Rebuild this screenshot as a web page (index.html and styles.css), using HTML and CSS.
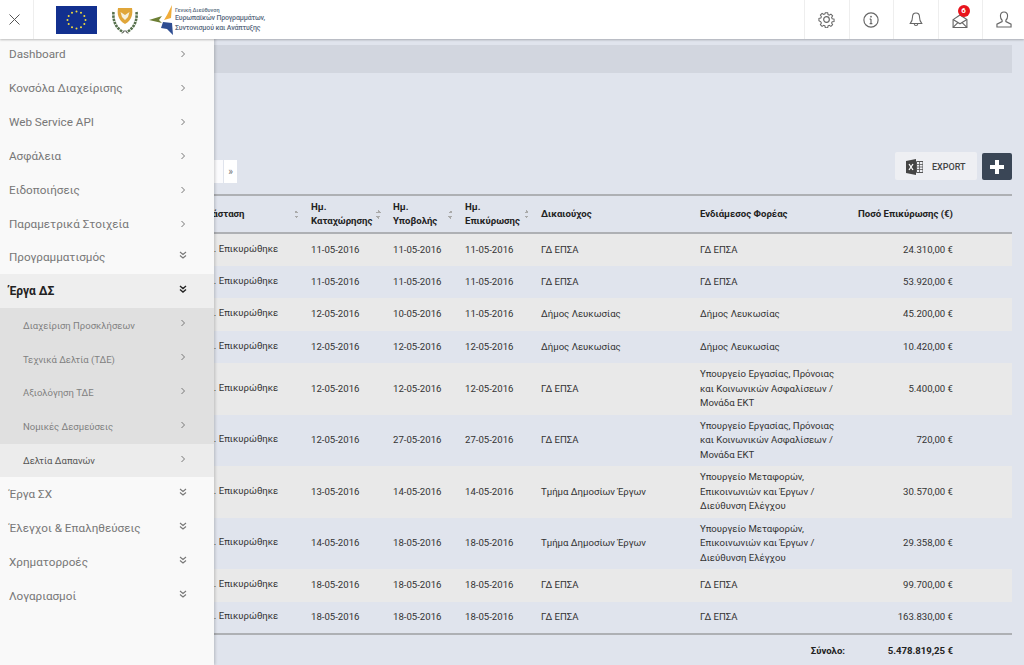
FILE: index.html
```html
<!DOCTYPE html>
<html>
  <head>
    <title>Δελτία Δαπανών</title>
    <meta name="viewport" content="width=device-width, initial-scale=1" />
    <link rel="stylesheet" href="styles.css">
  </head>
  <body>
    <!-- header -->
    <header class="topbar">
      <div class="close-cell">
        <svg width="11" height="11" viewBox="0 0 11 11"><path d="M.5.5l10 10M10.500.5l-10 10" stroke="#555" stroke-width="1" fill="none"/></svg>
      </div>
      <div class="logos">
        <svg class="flag" width="41" height="28" viewBox="0 0 41 28">
          <rect width="41" height="28" fill="#12308f"/>
          <g fill="#f2dc3c">
            <circle cx="20.500" cy="5.500" r="1"/><circle cx="25" cy="6.700" r="1"/><circle cx="28.300" cy="10" r="1"/>
            <circle cx="29.500" cy="14" r="1"/><circle cx="28.300" cy="18" r="1"/><circle cx="25" cy="21.300" r="1"/>
            <circle cx="20.500" cy="22.500" r="1"/><circle cx="16" cy="21.300" r="1"/><circle cx="12.700" cy="18" r="1"/>
            <circle cx="11.500" cy="14" r="1"/><circle cx="12.700" cy="10" r="1"/><circle cx="16" cy="6.700" r="1"/>
          </g>
        </svg>
        <svg class="emblem" width="28" height="28" viewBox="0 0 28 28">
          <path d="M7 2h14c1 6 0 12-7 16C7 14 6 8 7 2z" fill="#e0a63a"/>
          <path d="M9.500 6l4.500 3 4.500-3-1.500 5-3 3-3-3z" fill="#f6f0dc"/>
          <path d="M2.500 6c-1 9 3 17 10 20M25.500 6c1 9-3 17-10 20" stroke="#56704c" stroke-width="2.600" stroke-dasharray="2.500 .8" fill="none"/>
          <path d="M11 27.500l3-3 3 3" stroke="#555" stroke-width="1" fill="none"/>
        </svg>
        <svg class="arrows" width="24" height="30" viewBox="0 0 24 30">
          <path d="M23 0l-1 13-7 2 3-5z" fill="#f0ac3a"/>
          <path d="M0 15l13-4-3 4 3 3z" fill="#6d7f35"/>
          <path d="M14 17l9 1 1 12-6-6-6-1z" fill="#2e4d92"/>
        </svg>
        <div class="logo-text">
          <span class="logo-small">Γενική Διεύθυνση</span>
          <span>Ευρωπαϊκών Προγραμμάτων,</span>
          <span>Συντονισμού και Ανάπτυξης</span>
        </div>
      </div>
      <div class="top-icons">
        <div class="top-icon">
          <svg width="17" height="17" viewBox="0 0 18 18" fill="none" stroke="#666" stroke-width="1.200"><path d="M7.600 1h2.800l.4 2.200 1.500.7 1.900-1.200 2 2-1.200 1.900.7 1.500 2.200.4v2.800l-2.200.4-.7 1.500 1.200 1.900-2 2-1.900-1.200-1.500.7-.4 2.200H7.600l-.4-2.200-1.500-.7-1.900 1.200-2-2 1.200-1.900-.7-1.500L.1 10.400V7.600l2.200-.4.7-1.500-1.200-1.900 2-2 1.900 1.200 1.500-.7z" transform="translate(.9 .9) scale(.9)"/><circle cx="9" cy="9" r="3"/></svg>
        </div>
        <div class="top-icon">
          <svg width="16" height="16" viewBox="0 0 18 18" fill="none" stroke="#666" stroke-width="1.300"><circle cx="9" cy="9" r="8"/><path d="M9 8v5M7.500 8H9M7.500 13h3" /><circle cx="9" cy="5.300" r="1" fill="#666" stroke="none"/></svg>
        </div>
        <div class="top-icon">
          <svg width="14" height="17" viewBox="0 0 16 18" fill="none" stroke="#666" stroke-width="1.200"><path d="M8 1.500c-2.800 0-4 2.200-4 4.500 0 4-1 5.500-2.500 7.500h13C13 11.500 12 10 12 6c0-2.300-1.200-4.500-4-4.500z"/><path d="M6 14c0 2.500 4 2.500 4 0"/></svg>
        </div>
        <div class="top-icon">
          <svg width="16" height="14" viewBox="0 0 16 15" fill="none" stroke="#666" stroke-width="1.200" class="mail"><path d="M.6 6L8 1l7.400 5v8.400H.6z"/><path d="M.6 6L8 10.500 15.400 6M.6 14.400L6 9M15.400 14.400L10 9"/></svg>
          <span class="badge">6</span>
        </div>
        <div class="top-icon">
          <svg width="16" height="17" viewBox="0 0 17 18" fill="none" stroke="#666" stroke-width="1.200"><path d="M8.500 1c-2.600 0-3.800 2-3.800 4.300 0 2 .8 3.500 1.800 4.500v1.400L1 14v3h15v-3l-5.500-2.800V9.800c1-1 1.800-2.500 1.800-4.500C12.300 3 11.100 1 8.500 1z"/></svg>
        </div>
      </div>
    </header>

    <!-- side menu -->
    <nav class="sidebar">
      <a class="menu-item">Dashboard<svg class="chev" viewBox="0 0 6 8"><path d="M1.500 1l3 3-3 3"/></svg></a>
      <a class="menu-item">Κονσόλα Διαχείρισης<svg class="chev" viewBox="0 0 6 8"><path d="M1.500 1l3 3-3 3"/></svg></a>
      <a class="menu-item">Web Service API<svg class="chev" viewBox="0 0 6 8"><path d="M1.500 1l3 3-3 3"/></svg></a>
      <a class="menu-item">Ασφάλεια<svg class="chev" viewBox="0 0 6 8"><path d="M1.500 1l3 3-3 3"/></svg></a>
      <a class="menu-item">Ειδοποιήσεις<svg class="chev" viewBox="0 0 6 8"><path d="M1.500 1l3 3-3 3"/></svg></a>
      <a class="menu-item">Παραμετρικά Στοιχεία<svg class="chev" viewBox="0 0 6 8"><path d="M1.500 1l3 3-3 3"/></svg></a>
      <a class="menu-item">Προγραμματισμός<svg class="dchev" viewBox="0 0 8 8"><path d="M1 1l3 2.500L7 1M1 4.500L4 7l3-2.500"/></svg></a>
      <a class="menu-item open">Έργα ΔΣ<svg class="dchev" viewBox="0 0 8 8"><path d="M1 1l3 2.500L7 1M1 4.500L4 7l3-2.500"/></svg></a>
      <a class="menu-item sub">Διαχείριση Προσκλήσεων<svg class="chev" viewBox="0 0 6 8"><path d="M1.500 1l3 3-3 3"/></svg></a>
      <a class="menu-item sub">Τεχνικά Δελτία (ΤΔΕ)<svg class="chev" viewBox="0 0 6 8"><path d="M1.500 1l3 3-3 3"/></svg></a>
      <a class="menu-item sub">Αξιολόγηση ΤΔΕ<svg class="chev" viewBox="0 0 6 8"><path d="M1.500 1l3 3-3 3"/></svg></a>
      <a class="menu-item sub">Νομικές Δεσμεύσεις<svg class="chev" viewBox="0 0 6 8"><path d="M1.500 1l3 3-3 3"/></svg></a>
      <a class="menu-item sub current">Δελτία Δαπανών<svg class="chev" viewBox="0 0 6 8"><path d="M1.500 1l3 3-3 3"/></svg></a>
      <a class="menu-item">Έργα ΣΧ<svg class="dchev" viewBox="0 0 8 8"><path d="M1 1l3 2.500L7 1M1 4.500L4 7l3-2.500"/></svg></a>
      <a class="menu-item">Έλεγχοι &amp; Επαληθεύσεις<svg class="dchev" viewBox="0 0 8 8"><path d="M1 1l3 2.500L7 1M1 4.500L4 7l3-2.500"/></svg></a>
      <a class="menu-item">Χρηματορροές<svg class="dchev" viewBox="0 0 8 8"><path d="M1 1l3 2.500L7 1M1 4.500L4 7l3-2.500"/></svg></a>
      <a class="menu-item">Λογαριασμοί<svg class="dchev" viewBox="0 0 8 8"><path d="M1 1l3 2.500L7 1M1 4.500L4 7l3-2.500"/></svg></a>
    </nav>

    <main class="content">
      <div class="strip"></div>

      <div class="toolbar">
        <div class="pager">
          <span class="page-cell wide"></span>
          <span class="page-cell">»</span>
        </div>
        <div class="actions">
          <button class="btn-export">
            <svg width="17" height="16" viewBox="0 0 17 16">
              <path d="M0 2l10-2v16L0 14z" fill="#444"/>
              <path d="M3 5l4 6M7 5l-4 6" stroke="#fff" stroke-width="1.300"/>
              <path d="M10.500 2.500H17v11h-6.500z" fill="none" stroke="#555"/>
              <path d="M10.500 5.500H17M10.500 8H17M10.500 10.500H17M13.500 2.500v11" stroke="#555" stroke-width=".8"/>
            </svg>
            EXPORT
          </button>
          <button class="btn-add">
            <svg width="14" height="14" viewBox="0 0 14 14"><path d="M7 0v14M0 7h14" stroke="#fff" stroke-width="4"/></svg>
          </button>
        </div>
      </div>

      <table class="grid">
        <colgroup>
          <col class="c-status"><col class="c-date1"><col class="c-date2"><col class="c-date3">
          <col class="c-owner"><col class="c-body"><col class="c-amount"><col class="c-rest">
        </colgroup>
        <thead>
          <tr>
            <th class="th-status"><div class="th-in">Κατάσταση<i class="sort"></i></div></th>
            <th><div class="th-in">Ημ. Καταχώρησης<i class="sort"></i></div></th>
            <th><div class="th-in">Ημ. Υποβολής<i class="sort"></i></div></th>
            <th><div class="th-in">Ημ. Επικύρωσης<i class="sort"></i></div></th>
            <th>Δικαιούχος</th>
            <th>Ενδιάμεσος Φορέας</th>
            <th class="num">Ποσό Επικύρωσης (€)</th>
            <th></th>
          </tr>
        </thead>
        <tbody>
          <tr><td class="st"><span>Δ. Επικυρώθηκε</span></td><td>11-05-2016</td><td>11-05-2016</td><td>11-05-2016</td><td>ΓΔ ΕΠΣΑ</td><td class="wrap">ΓΔ ΕΠΣΑ</td><td class="num">24.310,00 €</td><td></td></tr>
          <tr><td class="st"><span>Δ. Επικυρώθηκε</span></td><td>11-05-2016</td><td>11-05-2016</td><td>11-05-2016</td><td>ΓΔ ΕΠΣΑ</td><td class="wrap">ΓΔ ΕΠΣΑ</td><td class="num">53.920,00 €</td><td></td></tr>
          <tr><td class="st"><span>Δ. Επικυρώθηκε</span></td><td>12-05-2016</td><td>10-05-2016</td><td>11-05-2016</td><td>Δήμος Λευκωσίας</td><td class="wrap">Δήμος Λευκωσίας</td><td class="num">45.200,00 €</td><td></td></tr>
          <tr><td class="st"><span>Δ. Επικυρώθηκε</span></td><td>12-05-2016</td><td>12-05-2016</td><td>12-05-2016</td><td>Δήμος Λευκωσίας</td><td class="wrap">Δήμος Λευκωσίας</td><td class="num">10.420,00 €</td><td></td></tr>
          <tr><td class="st"><span>Δ. Επικυρώθηκε</span></td><td>12-05-2016</td><td>12-05-2016</td><td>12-05-2016</td><td>ΓΔ ΕΠΣΑ</td><td class="wrap">Υπουργείο Εργασίας, Πρόνοιας και Κοινωνικών Ασφαλίσεων / Μονάδα ΕΚΤ</td><td class="num">5.400,00 €</td><td></td></tr>
          <tr><td class="st"><span>Δ. Επικυρώθηκε</span></td><td>12-05-2016</td><td>27-05-2016</td><td>27-05-2016</td><td>ΓΔ ΕΠΣΑ</td><td class="wrap">Υπουργείο Εργασίας, Πρόνοιας και Κοινωνικών Ασφαλίσεων / Μονάδα ΕΚΤ</td><td class="num">720,00 €</td><td></td></tr>
          <tr><td class="st"><span>Δ. Επικυρώθηκε</span></td><td>13-05-2016</td><td>14-05-2016</td><td>14-05-2016</td><td>Τμήμα Δημοσίων Έργων</td><td class="wrap">Υπουργείο Μεταφορών, Επικοινωνιών και Έργων / Διεύθυνση Ελέγχου</td><td class="num">30.570,00 €</td><td></td></tr>
          <tr><td class="st"><span>Δ. Επικυρώθηκε</span></td><td>14-05-2016</td><td>18-05-2016</td><td>18-05-2016</td><td>Τμήμα Δημοσίων Έργων</td><td class="wrap">Υπουργείο Μεταφορών, Επικοινωνιών και Έργων / Διεύθυνση Ελέγχου</td><td class="num">29.358,00 €</td><td></td></tr>
          <tr><td class="st"><span>Δ. Επικυρώθηκε</span></td><td>18-05-2016</td><td>18-05-2016</td><td>18-05-2016</td><td>ΓΔ ΕΠΣΑ</td><td class="wrap">ΓΔ ΕΠΣΑ</td><td class="num">99.700,00 €</td><td></td></tr>
          <tr><td class="st"><span>Δ. Επικυρώθηκε</span></td><td>18-05-2016</td><td>18-05-2016</td><td>18-05-2016</td><td>ΓΔ ΕΠΣΑ</td><td class="wrap">ΓΔ ΕΠΣΑ</td><td class="num">163.830,00 €</td><td></td></tr>
        </tbody>
        <tfoot>
          <tr>
            <td colspan="6" class="total-label">Σύνολο:</td>
            <td class="num total-value">5.478.819,25 €</td>
            <td></td>
          </tr>
        </tfoot>
      </table>
    </main>
  </body>
</html>
```

FILE: styles.css
```css
/* basic */
* {
  margin: 0;
  padding: 0;
  box-sizing: border-box;
}

html,
body {
  height: 665px;
  overflow: hidden;
}

body {
  background-color: #e0e4ed;
  font-family: Roboto, "Liberation Sans", sans-serif;
  color: #333;
}

/* header */
.topbar {
  position: relative;
  z-index: 3;
  display: flex;
  align-items: stretch;
  height: 39px;
  background-color: #fff;
  box-shadow: 0 1px 2px rgba(0, 0, 0, 0.25);
}

.close-cell {
  width: 34px;
  display: flex;
  align-items: center;
  justify-content: center;
  padding-right: 4px;
  border-right: 1px solid #eee;
}

.logos {
  flex: 1;
  display: flex;
  align-items: center;
  padding-left: 22px;
}

.flag {
  margin-right: 14px;
}

.emblem {
  margin-right: 10px;
}

.arrows {
  margin-right: 2px;
}

.logo-text {
  display: flex;
  flex-direction: column;
  font-size: 7px;
  line-height: 9.5px;
  letter-spacing: -0.15px;
  color: #5a6a80;
  font-weight: 500;
}

.logo-small {
  font-size: 5.5px;
  line-height: 8px;
  letter-spacing: 0;
}

.top-icons {
  display: flex;
}

.top-icon {
  position: relative;
  width: 44.5px;
  display: flex;
  align-items: center;
  justify-content: center;
  border-left: 1px solid #eee;
}

.top-icon:last-child {
  width: 42px;
}

.badge {
  position: absolute;
  top: 5px;
  left: 19px;
  width: 12px;
  height: 12px;
  border-radius: 50%;
  background-color: #e8141c;
  color: #fff;
  font-size: 8px;
  font-weight: 700;
  line-height: 12px;
  text-align: center;
}

.mail {
  margin-top: 3px;
}

/* side menu */
.sidebar {
  position: absolute;
  top: 37.5px;
  left: 0;
  bottom: 0;
  z-index: 2;
  width: 214px;
  background-color: #f9f9f9;
  box-shadow: 1px 0 3px rgba(0, 0, 0, 0.2);
}

.menu-item {
  display: flex;
  align-items: center;
  justify-content: space-between;
  height: 33.85px;
  padding: 0 28px 0 9px;
  font-size: 11.7px;
  color: #777;
}

.menu-item.open {
  background-color: #eee;
  color: #222;
  font-weight: 700;
  font-size: 12px;
}

.menu-item.sub {
  background-color: #e0e0e0;
  padding-left: 23px;
  font-size: 9.5px;
  color: #808080;
}

.menu-item.current {
  background-color: #ececec;
  color: #555;
}

.chev {
  width: 6px;
  height: 8px;
  fill: none;
  stroke: #777;
  stroke-width: 1;
}

.sub .chev {
  margin-bottom: 4px;
}

.dchev {
  width: 8px;
  height: 8px;
  margin-right: -1px;
  margin-bottom: 4px;
  fill: none;
  stroke: #777;
  stroke-width: 1.1;
}

.open .dchev {
  stroke: #222;
  stroke-width: 1.4;
}

/* content */
.content {
  padding: 6px 12px 0;
}

.strip {
  height: 28px;
  background-color: #d2d6df;
}

.toolbar {
  display: flex;
  justify-content: space-between;
  align-items: flex-start;
  margin-top: 80px;
  height: 41px;
}

.pager {
  display: flex;
  gap: 1px;
  margin-top: 7px;
  padding-left: 190px;
}

.page-cell {
  width: 13px;
  height: 23px;
  background-color: #fff;
  color: #777;
  font-size: 10px;
  line-height: 23px;
  text-align: center;
}

.page-cell.wide {
  width: 21px;
  background-color: #fbfbfd;
}

.actions {
  display: flex;
  gap: 5px;
}

.btn-export {
  display: flex;
  align-items: center;
  gap: 9px;
  width: 82px;
  height: 28px;
  margin-top: -1px;
  padding: 2px 0 0 11px;
  border: none;
  border-radius: 2px;
  background-color: #eeeff3;
  color: #444;
  font-family: inherit;
  font-size: 9px;
  font-weight: 500;
}

.btn-add {
  display: flex;
  align-items: center;
  justify-content: center;
  width: 30px;
  height: 27px;
  border: none;
  border-radius: 2px;
  background-color: #3a4656;
}

/* table */
.grid {
  width: 100%;
  table-layout: fixed;
  border-collapse: collapse;
  font-size: 9.6px;
  color: #333;
}

.c-status { width: 291px; }
.c-date1 { width: 82px; }
.c-date2 { width: 72px; }
.c-date3 { width: 76px; }
.c-owner { width: 159px; }
.c-body { width: 161px; }
.c-amount { width: 108px; }
.c-rest { width: 51px; }

.grid thead tr {
  border-top: 2px solid #aeb0b4;
  border-bottom: 2px solid #aeb0b4;
}

.grid th {
  height: 38px;
  padding: 0 8px;
  text-align: left;
  font-weight: 700;
  line-height: 14px;
  color: #222;
  white-space: normal;
}

.th-in {
  display: flex;
  align-items: center;
  justify-content: space-between;
  margin-right: -4px;
}

.grid .th-status {
  padding-left: 184px;
}

.sort {
  flex: none;
  width: 5px;
  height: 9px;
  background:
    linear-gradient(135deg, transparent 50%, #aaa 50%) 0 0 / 3px 3px no-repeat,
    linear-gradient(225deg, transparent 50%, #aaa 50%) 2px 0 / 3px 3px no-repeat,
    linear-gradient(45deg, transparent 50%, #aaa 50%) 0 6px / 3px 3px no-repeat,
    linear-gradient(315deg, transparent 50%, #aaa 50%) 2px 6px / 3px 3px no-repeat;
}

.grid td {
  height: 32.5px;
  padding: 4px 8px;
  line-height: 14.5px;
  vertical-align: middle;
}

.grid tbody tr:nth-child(odd) {
  background-color: #e9e9e9;
}

.grid tbody tr:last-child {
  border-bottom: 2px solid #aeb0b4;
}

.grid td.st {
  padding-left: 195px;
  padding-bottom: 6px;
  white-space: nowrap;
}

.grid td.wrap {
  padding-right: 17px;
}

.grid .num {
  text-align: right;
  white-space: nowrap;
}

.grid th.num {
  padding-left: 0;
}

.total-label {
  text-align: right;
  font-weight: 700;
  color: #222;
}

.total-value {
  font-weight: 700;
  color: #222;
}
```
